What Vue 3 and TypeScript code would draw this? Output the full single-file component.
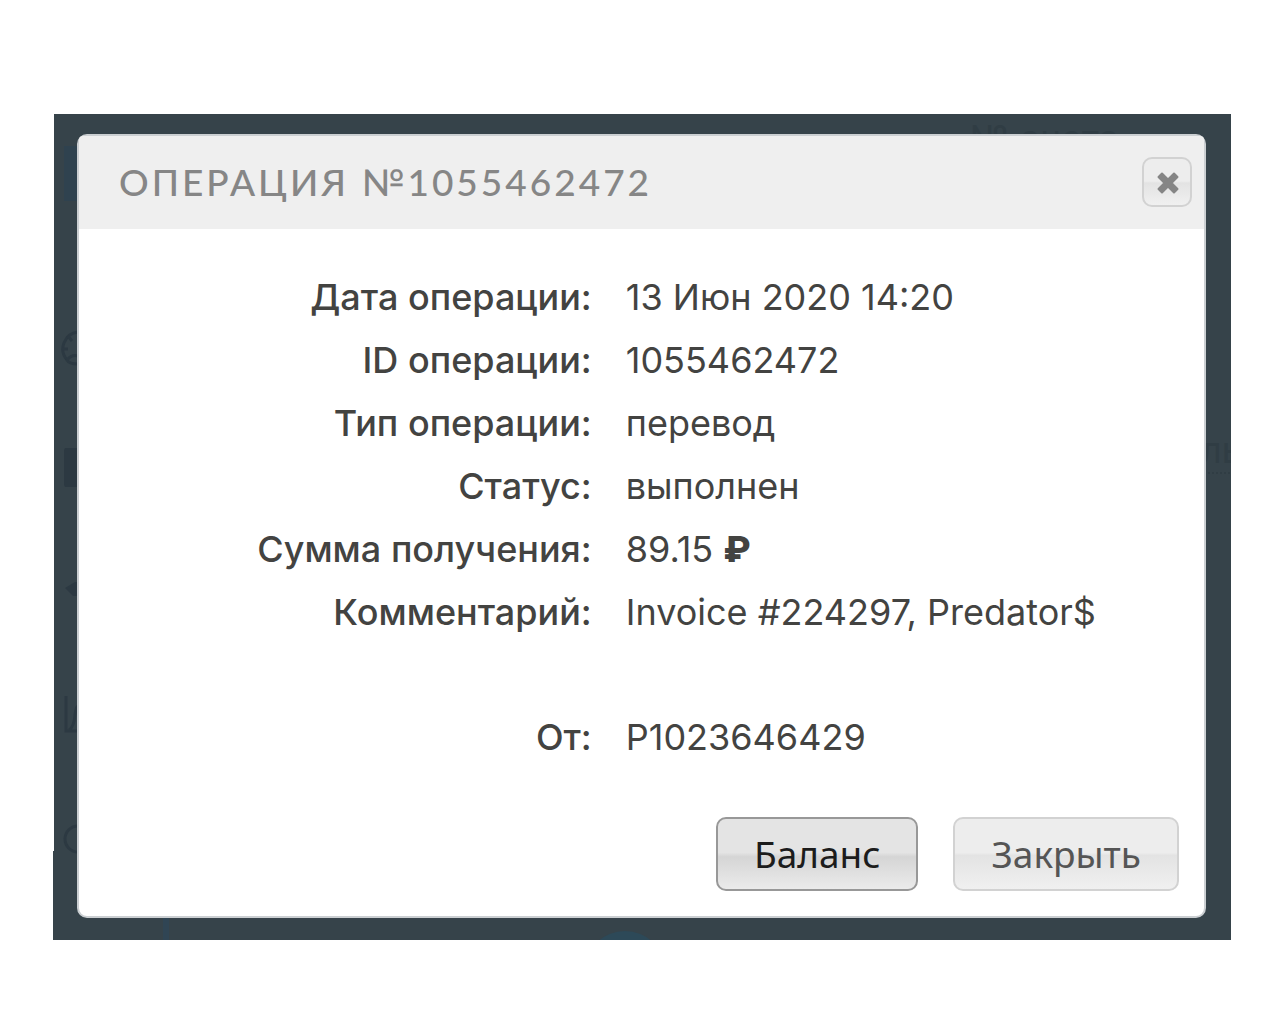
<script setup lang="ts">
interface Field {
  label: string
  value: string
  currency?: string
  separated?: boolean
}

const operationId = '1055462472'

const fields: Field[] = [
  { label: 'Дата операции:', value: '13 Июн 2020 14:20' },
  { label: 'ID операции:', value: operationId },
  { label: 'Тип операции:', value: 'перевод' },
  { label: 'Статус:', value: 'выполнен' },
  { label: 'Сумма получения:', value: '89.15', currency: '₽' },
  { label: 'Комментарий:', value: 'Invoice #224297, Predator$' },
  { label: 'От:', value: 'P1023646429', separated: true },
]
</script>

<template>
  <main class="page">
    <div class="backdrop">
      <!-- Dimmed page behind the dialog -->
      <div class="behind" aria-hidden="true">
        <svg class="rail" width="24" height="826" viewBox="0 0 24 826">
          <path d="M10 32h14v55H10z" fill="#2f424f" />
          <g fill="none" stroke="#2c3942" stroke-width="3">
            <path d="M24 218a17 17 0 0 0-11 28q2 4 11 4" />
            <path d="M8 235h6M14 222l4 5M13 246q5-6 11-4" />
            <path d="M12 582v35h12M15 616q5-3 6-15 1-9 3-9" />
            <path d="M24 712a13 13 0 0 0 0 26" />
          </g>
          <path d="M12 334h12v39H12q-2 0-2-3v-33q0-3 2-3z" fill="#2c3942" />
          <path d="M11 474l10-6h3v14h-5z" fill="#2c3942" />
        </svg>
        <span class="ghost ghost-top">№ счета</span>
        <span class="ghost ghost-side">ль</span>
        <span class="ghost-line"></span>
        <span class="ghost-disc"></span>
      </div>

      <section class="dialog" role="dialog" aria-labelledby="dialog-title">
        <header class="header">
          <h1 id="dialog-title" class="title">ОПЕРАЦИЯ №{{ operationId }}</h1>
          <button class="btn close" type="button" aria-label="Закрыть окно">
            <svg width="28" height="28" viewBox="0 0 28 28" aria-hidden="true">
              <path
                d="M9 5.500L15 11.500L21 5.500L24.500 9L18.500 15L24.500 21L21 24.500L15 18.500L9 24.500L5.500 21L11.500 15L5.500 9Z"
                fill="#858585"
                stroke="#858585"
                stroke-width="2"
                stroke-linejoin="round"
              />
            </svg>
          </button>
        </header>

        <table class="fields">
          <tbody>
            <tr v-for="field in fields" :key="field.label" :class="{ separated: field.separated }">
              <th scope="row">{{ field.label }}</th>
              <td>
                {{ field.value }}
                <b v-if="field.currency" class="currency">{{ field.currency }}</b>
              </td>
            </tr>
          </tbody>
        </table>

        <footer class="actions">
          <button class="btn action primary" type="button">Баланс</button>
          <button class="btn action" type="button">Закрыть</button>
        </footer>
      </section>
    </div>
  </main>
</template>

<style>
body {
  background: #fff;
}
</style>

<style scoped>
.page {
  padding: 114px 49px 84px 54px;
  font-family: Inter, "Noto Sans", sans-serif;
  color: #434341;
}

.backdrop {
  position: relative;
  padding: 20px 25px 22px 23px;
  background: #36434a;
}

.backdrop::before {
  content: "";
  position: absolute;
  left: -1px;
  bottom: 0;
  width: 1px;
  height: 89px;
  background: #36434a;
}

.behind {
  position: absolute;
  inset: 0;
  overflow: hidden;
}

.rail {
  position: absolute;
  left: 0;
  top: 0;
}

.ghost {
  position: absolute;
  font-size: 36px;
  line-height: 44px;
  color: #303d44;
  white-space: nowrap;
}

.ghost-top {
  top: 2px;
  right: 112px;
}

.ghost-side {
  top: 314px;
  left: calc(100% - 30px);
  border-bottom: 2px dotted #303d44;
}

.ghost-line {
  position: absolute;
  left: 109px;
  bottom: 0;
  width: 6px;
  height: 22px;
  background: #304554;
}

.ghost-disc {
  position: absolute;
  left: 531px;
  bottom: -71px;
  width: 80px;
  height: 80px;
  border-radius: 50%;
  background: #2d4958;
}

.dialog {
  position: relative;
  border: 2px solid #cbcfd2;
  border-radius: 10px;
  background: #fff;
}

.header {
  box-sizing: border-box;
  display: flex;
  align-items: center;
  justify-content: space-between;
  height: 93px;
  padding: 0 12px 2px 40px;
  border-radius: 4px 4px 0 0;
  background: #efefef;
}

.title {
  margin: 0;
  font-family: Lato, sans-serif;
  font-size: 37px;
  font-weight: 500;
  line-height: 48px;
  letter-spacing: 3px;
  color: #868686;
}

.btn {
  box-sizing: border-box;
  border: 2px solid #d2d2d2;
  border-radius: 10px;
  background: linear-gradient(#ededed 0%, #ededed 48%, #e3e3e3 52%, #f0f0f0 100%);
  color: #555;
  font-family: "Noto Sans", sans-serif;
  cursor: pointer;
}

.close {
  display: flex;
  align-items: center;
  justify-content: center;
  width: 50px;
  height: 50px;
  padding: 0;
}

.fields {
  width: 100%;
  margin-top: 37px;
  border-collapse: collapse;
  table-layout: fixed;
  font-size: 36px;
  line-height: 63px;
}

.fields th,
.fields td {
  padding: 0;
  vertical-align: top;
  white-space: nowrap;
}

.fields th {
  width: 47%;
  padding-right: 16px;
  box-sizing: border-box;
  text-align: right;
  font-weight: 500;
}

.fields td {
  padding-left: 18px;
  font-weight: 400;
}

.fields tr.separated th,
.fields tr.separated td {
  padding-top: 62px;
}

.currency {
  font-weight: 800;
}

.actions {
  display: flex;
  justify-content: flex-end;
  gap: 35px;
  padding: 48px 25px 25px;
}

.action {
  height: 74px;
  padding: 0 36px;
  font-size: 37px;
  line-height: 48px;
}

.primary {
  border-color: #989898;
  background: linear-gradient(#e4e4e4 0%, #e4e4e4 48%, #d5d5d5 54%, #ebebeb 100%);
  color: #1c1c1c;
}
</style>
